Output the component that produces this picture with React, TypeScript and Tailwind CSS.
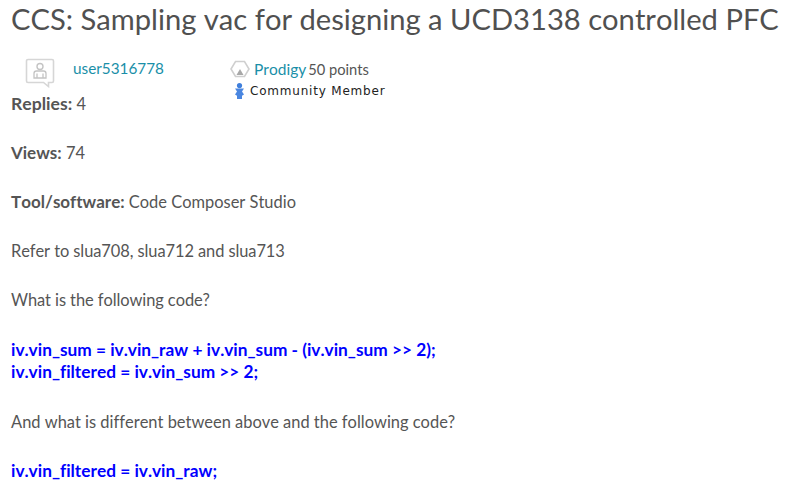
export default function App() {
  return (
    <div className="h-[495px] w-[794px] overflow-hidden bg-white pl-[11px] font-['Lato',sans-serif] text-[16.45px] leading-[22px] text-[#555555] [font-kerning:none] [font-variant-ligatures:none]">
      <h1 className="h-[47px] text-[29.15px] leading-[38px] whitespace-nowrap text-[#505050]">
        CCS: Sampling vac for designing a UCD3138 controlled PFC
      </h1>

      <div className="flex h-[48px]">
        <div className="flex w-[219px] items-start pl-[14px] pt-[11px]">
          <svg width="30" height="30" viewBox="0 0 30 30" fill="none" className="shrink-0">
            <path d="M3 1.500h24a1.500 1.500 0 0 1 1.500 1.500v20a1.500 1.500 0 0 1-1.500 1.500h-3.500v4l-5-4H3A1.500 1.500 0 0 1 1.500 23V3A1.500 1.500 0 0 1 3 1.500z" stroke="#d6d6d6" strokeWidth="1.600" />
            <circle cx="15" cy="8.500" r="3" stroke="#c4c4c4" strokeWidth="1.400" />
            <path d="M9 20v-4.500c0-1.500 1-2.500 2.500-2.500h7c1.500 0 2.500 1 2.500 2.500V20zM12 15.500V20M18 15.500V20" stroke="#c4c4c4" strokeWidth="1.300" />
          </svg>
          <a className="ml-[18px] mt-[-1px] text-[15.3px] text-[#1a8fa8]">user5316778</a>
        </div>
        <div className="pt-[11px]">
          <div className="flex items-center text-[15.5px] leading-[22px]">
            <svg width="20" height="18" viewBox="0 0 20 18" fill="none" className="mr-[4px] shrink-0">
              <path d="M5.500 1.500h9L19 9l-4.500 7.500h-9L1 9z" stroke="#cfcfcf" strokeWidth="1.600" />
              <path d="M6.500 15l3.500-6 3.500 6z" fill="#a8a8a8" />
            </svg>
            <span className="text-[#1a8fa8]">Prodigy</span>
            <span className="ml-[2px] text-[14.7px]">50 points</span>
          </div>
          <div className="mt-[3px] flex items-center">
            <svg width="11" height="16" viewBox="0 0 11 16" className="ml-[4px] mr-[5px] shrink-0">
              <circle cx="5.500" cy="2.600" r="2.600" fill="#3f7fdc" />
              <path d="M1 5.500h9L8 8.500l2 3-2 1.200V16H3v-3.300L1 11.500l2-3z" fill="#4a86e0" />
            </svg>
            <span className="font-['DejaVu_Sans',sans-serif] text-[12px] leading-[13px] tracking-[0.8px] text-[#222222]">
              Community Member
            </span>
          </div>
        </div>
      </div>

      <div className="mt-[-2px] flex flex-col gap-[27px]">
        <p><b className="text-[17.6px]">Replies:</b> 4</p>
        <p><b className="text-[17px]">Views:</b> 74</p>
        <p><b className="text-[17px]">Tool/software:</b> Code Composer Studio</p>
        <p className="tracking-[-0.08px]">Refer to slua708, slua712 and slua713</p>
        <p className="tracking-[-0.08px]">What is the following code?</p>
        <p className="py-[1px] text-[17.3px] font-bold text-[#0000ff]">
          iv.vin_sum = iv.vin_raw + iv.vin_sum - (iv.vin_sum &gt;&gt; 2);
          <br />
          iv.vin_filtered = iv.vin_sum &gt;&gt; 2;
        </p>
        <p>And what is different between above and the following code?</p>
        <p className="text-[17.3px] font-bold text-[#0000ff]">iv.vin_filtered = iv.vin_raw;</p>
      </div>
    </div>
  )
}
